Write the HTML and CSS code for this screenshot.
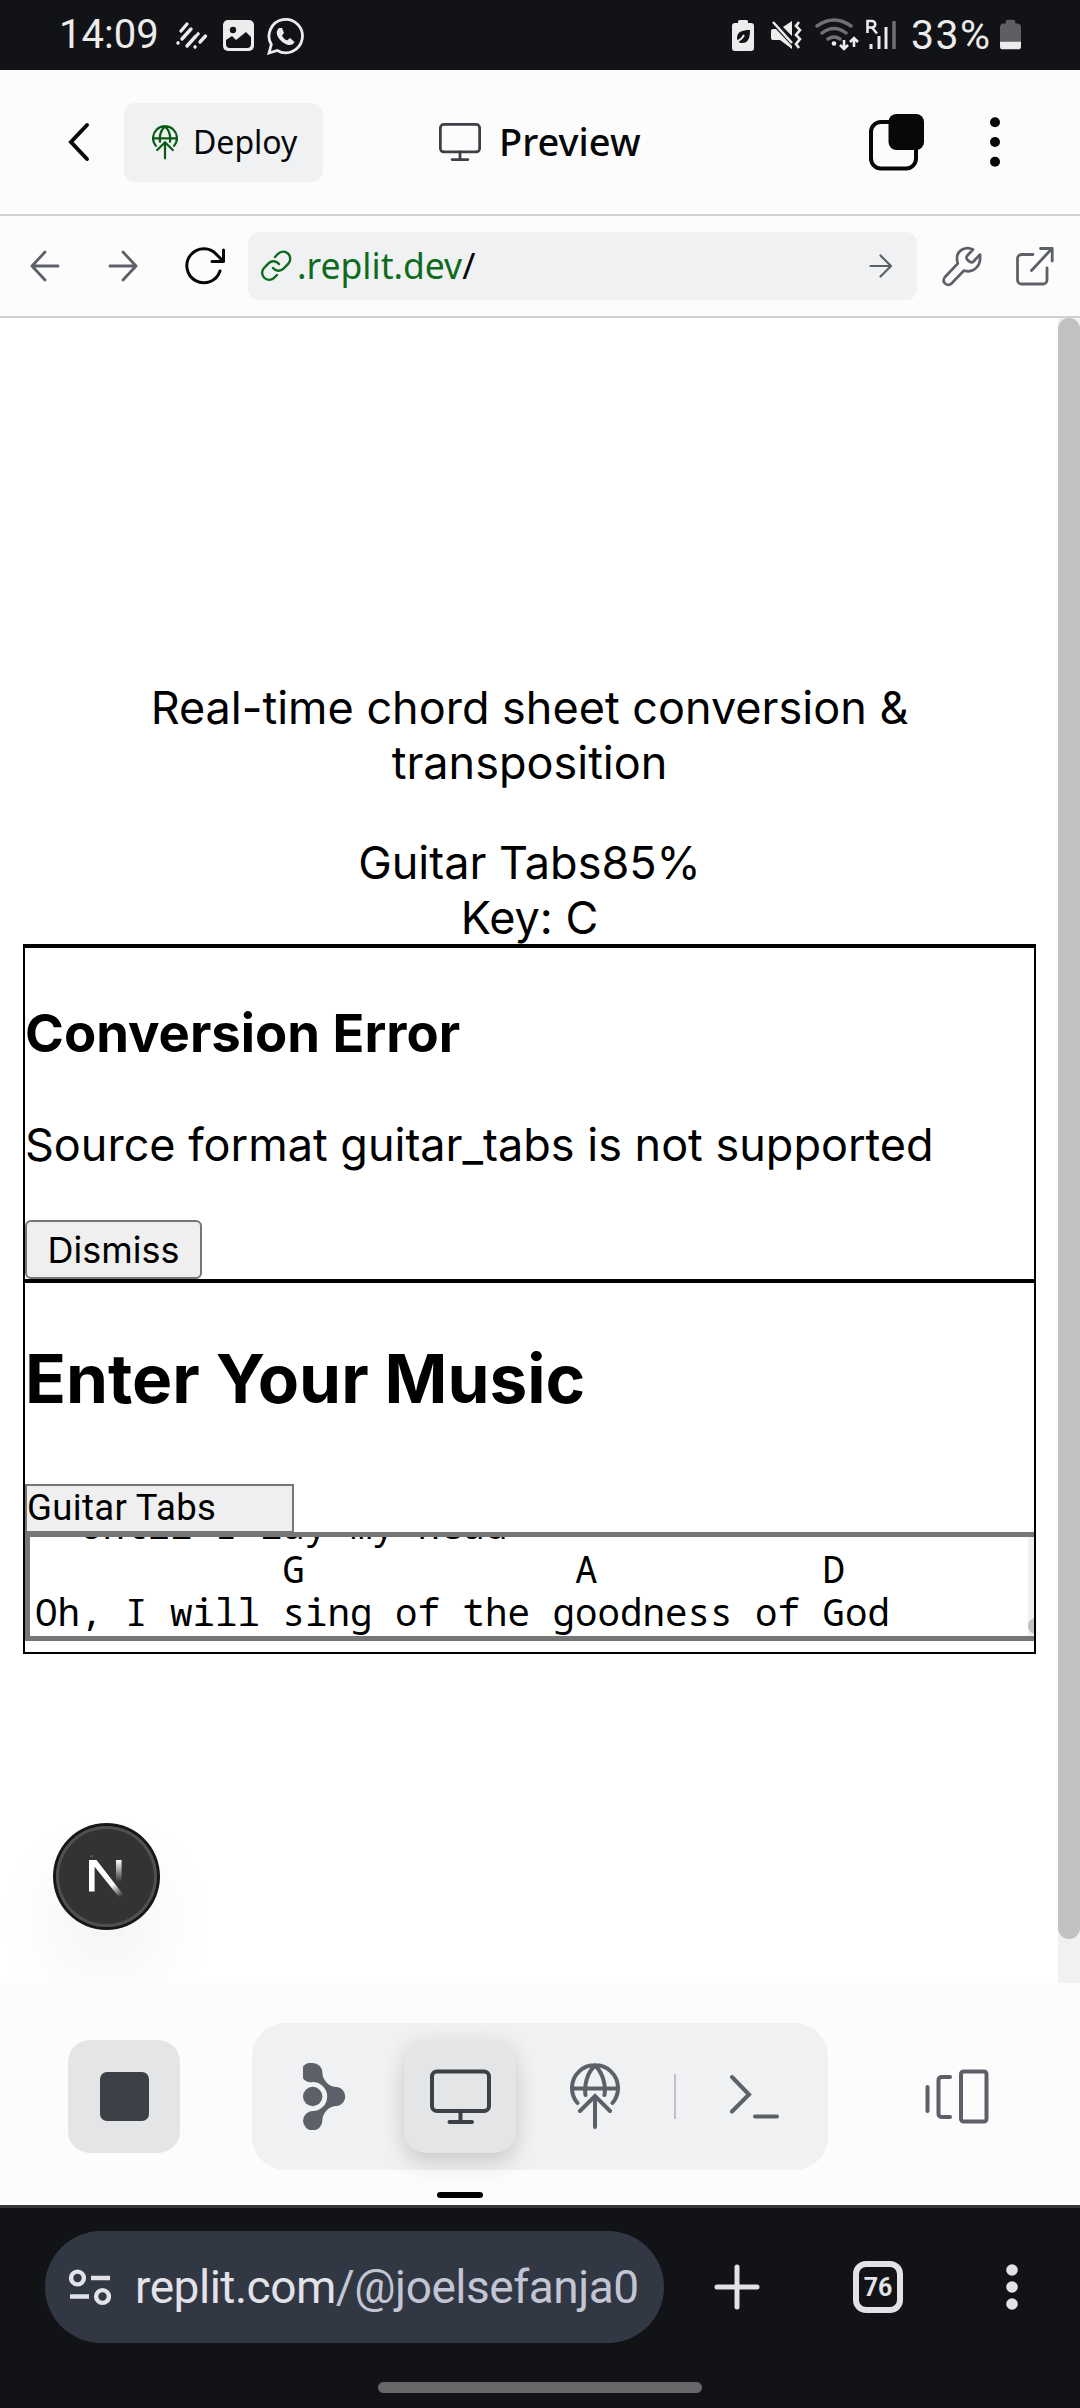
FILE: index.html
```html
<!DOCTYPE html>
<html lang="en">
<head>
<meta charset="utf-8">
<title>Preview</title>
<link rel="stylesheet" href="styles.css">
</head>
<body>
<div class="phone">
  <div class="status">
    <span class="clock">14:09</span>
    <svg class="st-left" width="130" height="40" viewBox="175 15 130 40" fill="none">
      <g stroke="#ececec" stroke-width="3.4" stroke-linecap="round"><path d="M181 31l6-7M178 43l.1-.1M182 39l9-10M187 46l9-10M198 34l.1-.1M195 47l.1-.1M200 42l5.500-6"/></g>
      <rect x="223" y="20" width="31" height="31" rx="5" fill="#ececec"/>
      <circle cx="233" cy="30" r="3.200" fill="#121317"/><path d="M226 40l6-4 4 4 10-8 5 5v7a4 4 0 0 1-4 4h-17a4 4 0 0 1-4-4z" fill="#121317"/>
      <path d="M269 53l2.300-8.500a16.700 16.700 0 1 1 6 6z" stroke="#ececec" stroke-width="2.800"/>
      <path d="M279 28c-5 4-1 11 4 14.500s10 3.500 11.500-.5l-4.500-4-3 2.500c-2.500-1-4-3-5-5l2-2.500-2-5z" fill="#ececec"/>
    </svg>
    <svg class="st-right" width="176" height="40" viewBox="728 15 176 40" fill="none">
      <path d="M738 21.500a1.500 1.500 0 0 1 1.500-1.500h7a1.500 1.500 0 0 1 1.500 1.500V23h3a3 3 0 0 1 3 3v22a3 3 0 0 1-3 3h-16a3 3 0 0 1-3-3V26a3 3 0 0 1 3-3h3z" fill="#ececec"/>
      <path d="M750 30c0 10-3 13-8 13-3 0-5-2-5-5 0-6 5-8 13-8z" fill="#121317"/><path d="M735 42c4-1 7-3 9-7" stroke="#ececec" stroke-width="2"/>
      <path d="M773 29h3l16 17v3l-12-9h-7a2 2 0 0 1-2-2v-7a2 2 0 0 1 2-2zM783 27l9-6v15z" fill="#ececec"/>
      <path d="M773 22l19 21" stroke="#ececec" stroke-width="2.600"/>
      <path d="M799 22l-3 4 4 4-4 5 4 4-4 5 3 4" stroke="#ececec" stroke-width="2.600"/>
      <g stroke="#707174" stroke-width="3.400" stroke-linecap="round"><path d="M817 26q17-12 34 0M822 33q12-9 24 0M828 39q6-4 12 0"/></g>
      <circle cx="834" cy="43.500" r="2.300" fill="#ececec"/>
      <path d="M844 40v9m-4-4l4 4 4-4M854 47v-9m-4 4l4-4 4 4" stroke="#ececec" stroke-width="2.600"/>
      <path d="M871 44v5M879 36v13M886 27v22" stroke="#ececec" stroke-width="3"/><path d="M894 21v28" stroke="#707174" stroke-width="3.500"/>
      <path d="M867.500 33V21h4.500a3.200 3.200 0 0 1 0 6.500h-4M872 27.500l5 6" stroke="#ececec" stroke-width="2.600"/>
    </svg>
    <span class="pct">33%</span>
    <svg class="batt" width="21" height="32" viewBox="0 0 22 32"><path d="M6 2a2 2 0 0 1 2-2h6a2 2 0 0 1 2 2v2h2a4 4 0 0 1 4 4v16H0V8a4 4 0 0 1 4-4h2z" fill="#5e5f62"/><path d="M0 23h22v5a3 3 0 0 1-3 3H3a3 3 0 0 1-3-3z" fill="#ececec"/></svg>
  </div>

  <header class="head">
    <svg class="back" width="24" height="40" viewBox="0 0 24 40" fill="none" stroke="#07080a" stroke-width="4" stroke-linecap="round"><path d="M20 3L4 20l16 17"/></svg>
    <button class="deploy">
      <svg width="26" height="35" viewBox="0 0 50 67" fill="none" stroke="#0a5a14" stroke-width="4.300" stroke-linecap="round"><path d="M7.500 40A23 23 0 1 1 42.500 40M2 25.500h46M15.500 32C14 22 17 10 25 2.500 33 10 36 22 34.500 32M25 64V34M10 48l15-15 15 15"/></svg>
      <span>Deploy</span>
    </button>
    <div class="title">
      <svg width="42" height="38" viewBox="0 0 61 55" fill="none" stroke="#3d4047" stroke-width="4" stroke-linecap="round"><rect x="2" y="2" width="57" height="40" rx="5"/><path d="M30.500 42v10M19 53h23"/></svg>
      <span>Preview</span>
    </div>
    <svg class="tabs" width="55" height="57" viewBox="0 0 55 57"><rect x="2" y="8" width="45" height="46.500" rx="10" fill="none" stroke="#07080a" stroke-width="4"/><rect x="19.500" y="0" width="35.500" height="36" rx="8" fill="#07080a"/></svg>
    <svg class="kebab" width="12" height="50" viewBox="0 0 12 50" fill="#07080a"><circle cx="6" cy="5.300" r="5"/><circle cx="6" cy="25" r="5"/><circle cx="6" cy="44.700" r="5"/></svg>
  </header>

  <div class="urlbar">
    <svg class="ar1" width="30" height="32" viewBox="0 0 30 32" fill="none" stroke="#5d6068" stroke-width="2.800" stroke-linecap="round" stroke-linejoin="round"><path d="M28 16H2M15 2L2 16l13 14"/></svg>
    <svg class="ar2" width="30" height="32" viewBox="0 0 30 32" fill="none" stroke="#5d6068" stroke-width="2.800" stroke-linecap="round" stroke-linejoin="round"><path d="M2 16h26M15 2l13 14-13 14"/></svg>
    <svg class="reload" width="42" height="40" viewBox="0 0 42 40" fill="none" stroke="#07080a" stroke-width="3" stroke-linecap="round" stroke-linejoin="round"><path d="M36 25A17 17 0 1 1 33 9l6 6M39.500 4v11.500H28"/></svg>
    <div class="url">
      <svg width="32" height="32" viewBox="0 0 32 32" fill="none" stroke="#0e6b1c" stroke-width="2.400" stroke-linecap="round"><path d="M15 7l3-3.200a7.100 7.100 0 0 1 10.200 10l-4.700 4.900a7.100 7.100 0 0 1-10.500-.7M17 25l-3.200 3.200a7.100 7.100 0 0 1-10-10l4.700-4.900a7.100 7.100 0 0 1 10.500.7"/></svg>
      <span class="addr">.replit.dev<i>/</i></span>
      <svg class="go" width="23" height="24" viewBox="0 0 23 24" fill="none" stroke="#5d6068" stroke-width="2.200" stroke-linecap="round" stroke-linejoin="round"><path d="M1.500 12h20M11.500 1.500L22 12 11.500 22.500"/></svg>
    </div>
    <svg class="wrench" width="40" height="41" viewBox="0 0 40 41" fill="none" stroke="#5d6068" stroke-width="2.700" stroke-linejoin="round"><path d="M31 3.500C24 0 14.500 4 15 13c0 2 .3 3 .8 4.500L3 31c-4 5 2.500 10.500 6.500 6.500L22 24.500c9 3 17.500-4 16-16L31 16c-3 1.500-8-3.500-6-6z"/></svg>
    <svg class="ext" width="38" height="40" viewBox="0 0 38 40" fill="none" stroke="#5d6068" stroke-width="2.800" stroke-linecap="round" stroke-linejoin="round"><path d="M17 8.500H5.500a4 4 0 0 0-4 4V34a4 4 0 0 0 4 4H27a4 4 0 0 0 4-4V22M15.500 24.500L36 2.500M24.500 2.500H36.200V15"/></svg>
  </div>

  <main class="view">
    <div class="page">
      <p class="lead">Real-time chord sheet conversion &amp; transposition</p>
      <div class="meta">Guitar Tabs85%<br>Key: C</div>
      <div class="box">
        <section class="err">
          <h3>Conversion Error</h3>
          <p>Source format guitar_tabs is not supported</p>
          <button class="dismiss">Dismiss</button>
        </section>
        <section class="music">
          <h2>Enter Your Music</h2>
          <div class="select">Guitar Tabs</div>
          <div class="area">
            <pre>  Until I lay my head
           G            A          D
Oh, I will sing of the goodness of God</pre>
            <div class="mini"><i></i></div>
          </div>
        </section>
      </div>
      <div class="nx">
        <svg width="36" height="46" viewBox="0 0 36 46">
          <defs><linearGradient id="a" x1="20" y1="24" x2="33" y2="41" gradientUnits="userSpaceOnUse"><stop stop-color="#fff"/><stop offset=".3" stop-color="#fff"/><stop offset="1" stop-color="#fff" stop-opacity="0"/></linearGradient><linearGradient id="b" x1="0" y1="5" x2="0" y2="27" gradientUnits="userSpaceOnUse"><stop stop-color="#fff"/><stop offset="1" stop-color="#fff" stop-opacity="0"/></linearGradient></defs>
          <path d="M1 1h3" stroke="#777"/><path d="M0 5h5.600v31.500H0z" fill="#fff"/><path d="M0 5h7.500L35 40.500 31.500 44 5 11z" fill="url(#a)"/><path d="M27 5h5.600v22H27z" fill="url(#b)"/>
        </svg>
      </div>
    </div>
    <div class="track"><div class="thumb"></div></div>
  </main>

  <nav class="dock">
    <button class="stop"><i></i></button>
    <div class="pill">
      <span class="cell"><svg width="44" height="67" viewBox="0 0 44 67" fill="#5d6068"><circle cx="9.700" cy="33.500" r="9.700"/><path d="M9.700 0a9.700 9.700 0 0 1 9.700 9.700C19.400 16 25 24 34 24a9.600 9.600 0 0 1 0 19c-9 0-14.600 8-14.600 14.300A9.700 9.700 0 1 1 9.700 48a14.500 14.500 0 0 0 0-29A9.700 9.700 0 1 1 9.700 0z"/></svg></span>
      <span class="cell on"><svg width="61" height="56" viewBox="0 0 61 56" fill="none" stroke="#3d4047" stroke-width="4" stroke-linecap="round"><rect x="2" y="2.500" width="57" height="39.500" rx="5"/><path d="M30.500 42v10M19.500 53h22.500"/></svg></span>
      <span class="cell"><svg width="50" height="67" viewBox="0 0 50 67" fill="none" stroke="#5d6068" stroke-width="4" stroke-linecap="round"><path d="M7.500 40A23 23 0 1 1 42.500 40M2 25.500h46M15.500 32C14 22 17 10 25 2.500 33 10 36 22 34.500 32M25 64V34M10 48l15-15 15 15"/></svg></span>
      <span class="sep"></span>
      <span class="cell"><svg width="50" height="46" viewBox="0 0 50 46" fill="none" stroke="#5d6068" stroke-width="4" stroke-linecap="round"><path d="M2 3l17 17.500L2 37.500M25 42.500h22"/></svg></span>
    </div>
    <svg class="cards" width="64" height="56" viewBox="0 0 64 56" fill="none" stroke="#5d6068" stroke-width="4" stroke-linecap="round"><path d="M2.500 18v24M25 8H16.500a3 3 0 0 0-3 3v34a3 3 0 0 0 3 3H25"/><rect x="36" y="2.500" width="25.500" height="50" rx="2.500"/></svg>
    <i class="ind"></i>
  </nav>

  <footer class="chrome">
    <div class="row">
      <div class="omni">
        <svg width="42" height="38" viewBox="0 0 42 38" fill="none" stroke="#e3e2e9" stroke-width="4.400"><circle cx="8.500" cy="10" r="6.400"/><path d="M22 10h19M1 28.500h19"/><circle cx="33.500" cy="28.500" r="6.400"/></svg>
        <span>replit.com<b>/@joelsefanja0</b></span>
      </div>
      <svg class="plus" width="46" height="46" viewBox="0 0 46 46" stroke="#e3e2e9" stroke-width="5" stroke-linecap="round"><path d="M23 3v40M3 23h40"/></svg>
      <span class="count">76</span>
      <svg class="dots" width="12" height="46" viewBox="0 0 12 46" fill="#e3e2e9"><circle cx="6" cy="6" r="5.800"/><circle cx="6" cy="23" r="5.800"/><circle cx="6" cy="40" r="5.800"/></svg>
    </div>
    <div class="home"></div>
  </footer>
</div>
</body>
</html>
```
FILE: styles.css
```css
* { box-sizing: border-box; }
body { margin: 0; background: #121317; }
button { border: 0; padding: 0; margin: 0; }
svg { display: block; flex: none; }
.phone { width: 1080px; height: 2408px; overflow: hidden; display: flex; flex-direction: column; font-family: Inter, sans-serif; color: #000; }

.status { height: 70px; flex: none; background: #121317; color: #ececec; display: flex; align-items: center; font: 400 40px/70px Roboto, sans-serif; }
.clock { margin-left: 59px; width: 116px; }
.st-right { margin-left: 423px; }
.pct { margin-left: 7px; width: 84px; font-size: 41px; letter-spacing: 1.400px; }
.batt { margin-left: 5px; }

.head { height: 146px; flex: none; background: #fcfcfc; border-bottom: 2px solid #d1d1d1; display: flex; align-items: center; font-family: "Noto Sans", sans-serif; color: #07080a; }
.back { margin-left: 67px; }
.deploy { margin-left: 33px; width: 199px; height: 79px; border-radius: 11px; background: #eff1f3; display: flex; align-items: center; padding-left: 28px; gap: 15px; font: 400 32px "Noto Sans", sans-serif; color: #07080a; }
.deploy span, .title span { padding-bottom: 2px; }
.title { margin-left: 116px; width: 430px; display: flex; align-items: center; gap: 18px; font-size: 38px; font-weight: 500; }
.kebab { margin-left: 65px; }

.urlbar { height: 102px; flex: none; background: #fcfcfc; border-bottom: 2px solid #d1d1d1; display: flex; align-items: center; }
.ar1 { margin-left: 30px; }
.ar2 { margin-left: 48px; }
.reload { margin-left: 46px; }
.url { margin-left: 22px; width: 669px; height: 68px; border-radius: 11px; background: #eff1f3; display: flex; align-items: center; padding: 0 25px 0 12px; }
.addr { flex: 1; margin-left: 5px; padding-bottom: 2px; font: 400 35.500px "Noto Sans", sans-serif; color: #0e6b1c; }
.addr i { font-style: normal; color: #07080a; }
.wrench { margin-left: 25px; }
.ext { margin-left: 34px; }

.view { height: 1665px; flex: none; background: #fff; display: flex; position: relative; overflow: hidden; }
.page { width: 1058px; padding: 362px 22px 0 23px; font-size: 45px; line-height: 55px; position: relative; }
.lead { margin: 0; padding: 0 60px; text-align: center; }
.meta { margin-top: 45px; text-align: center; }
.box { width: 1013px; height: 710px; border: 2px solid #000; overflow: hidden; margin-top: -1px; }
.err { height: 335px; border-top: 2px solid #000; border-bottom: 2px solid #000; }
.err h3 { margin: 0; padding-top: 53px; font-size: 52.600px; line-height: 64px; }
.err p { margin: 52px 0 0; }
.dismiss { margin-top: 48px; display: block; width: 177px; height: 59px; border: 2px solid #767676; border-radius: 6px; background: #efefef; font: 400 36px Inter, sans-serif; color: #000; }
.music { border-top: 2px solid #000; height: 373px; }
.music h2 { margin: 0; padding-top: 55px; font-size: 67.500px; line-height: 82px; }
.select { margin-top: 64px; width: 269px; height: 49px; border: 2px solid #767676; background: #efefef; font: 400 36.500px/44px Roboto, sans-serif; letter-spacing: .350px; }
.area { margin-top: -1px; width: 1024px; height: 109px; border: 5px solid #767676; overflow: hidden; background: #fff; display: flex; }
.area pre { margin: -34px 0 0; padding-left: 5px; width: 998px; flex: none; font: 37.500px/43.700px "Droid Sans Mono", "Noto Sans Mono", "Liberation Mono", monospace; }
.mini { width: 16px; background: #f0f0f0; display: flex; align-items: flex-end; padding-bottom: 2px; }
.mini i { width: 16px; height: 16px; border-radius: 8px; background: #c1c1c1; }
.nx { position: absolute; left: 56px; top: 1508px; width: 101px; height: 101px; border-radius: 50%; background: #333; box-shadow: 0 0 0 3px #171717, inset 0 0 0 3px #505050, 0 45px 90px -14px rgba(0,0,0,.12); display: flex; padding: 29px 0 0 33px; }
.track { width: 22px; background: #f1f1f1; }
.thumb { height: 1621px; border-radius: 11px; background: #c1c1c1; }

.dock { height: 222px; flex: none; background: #fcfcfc; display: flex; align-items: flex-start; position: relative; padding-top: 40px; }
.stop { margin: 17px 0 0 68px; width: 112px; height: 113px; border-radius: 22px; background: #e4e5e6; display: flex; align-items: center; justify-content: center; }
.stop i { width: 49px; height: 49px; border-radius: 7px; background: #3d4047; }
.pill { margin-left: 72px; width: 576px; height: 147px; border-radius: 33px; background: #eff1f3; display: flex; align-items: center; padding-left: 17px; }
.cell { flex: none; width: 112px; height: 113px; border-radius: 22px; display: flex; align-items: center; justify-content: center; margin-right: 23px; }
.cell:last-child { margin-right: 0; }
.on { background: #e4e5e6; box-shadow: 0 11px 22px rgba(0,0,0,.13), 0 0 22px rgba(0,0,0,.05); }
.sep { flex: none; width: 2px; height: 45px; background: #c0c2c5; margin-right: 23px; }
.cards { margin: 46px 0 0 97px; }
.ind { position: absolute; left: 437px; top: 209px; width: 46px; height: 6px; border-radius: 3px; background: #000; }

.chrome { flex: 1; background: #121317; border-top: 3px solid #35363a; }
.row { display: flex; align-items: center; height: 112px; margin-top: 23px; }
.omni { margin-left: 45px; width: 619px; height: 112px; border-radius: 56px; background: #323744; display: flex; align-items: center; padding-left: 24px; gap: 24px; font: 400 46px Roboto, sans-serif; letter-spacing: -.480px; color: #e3e2e9; white-space: nowrap; }
.omni b { font-weight: 400; color: #c2c5d3; }
.plus { margin-left: 50px; }
.count { margin-left: 93px; width: 50px; height: 52px; border: 6px solid #e3e2e9; border-radius: 13px; display: flex; align-items: center; justify-content: center; font: 700 25px Roboto, sans-serif; color: #e3e2e9; }
.dots { margin-left: 103px; }
.home { width: 324px; height: 11px; border-radius: 6px; background: #68686a; margin: 39px auto 0; }
```
